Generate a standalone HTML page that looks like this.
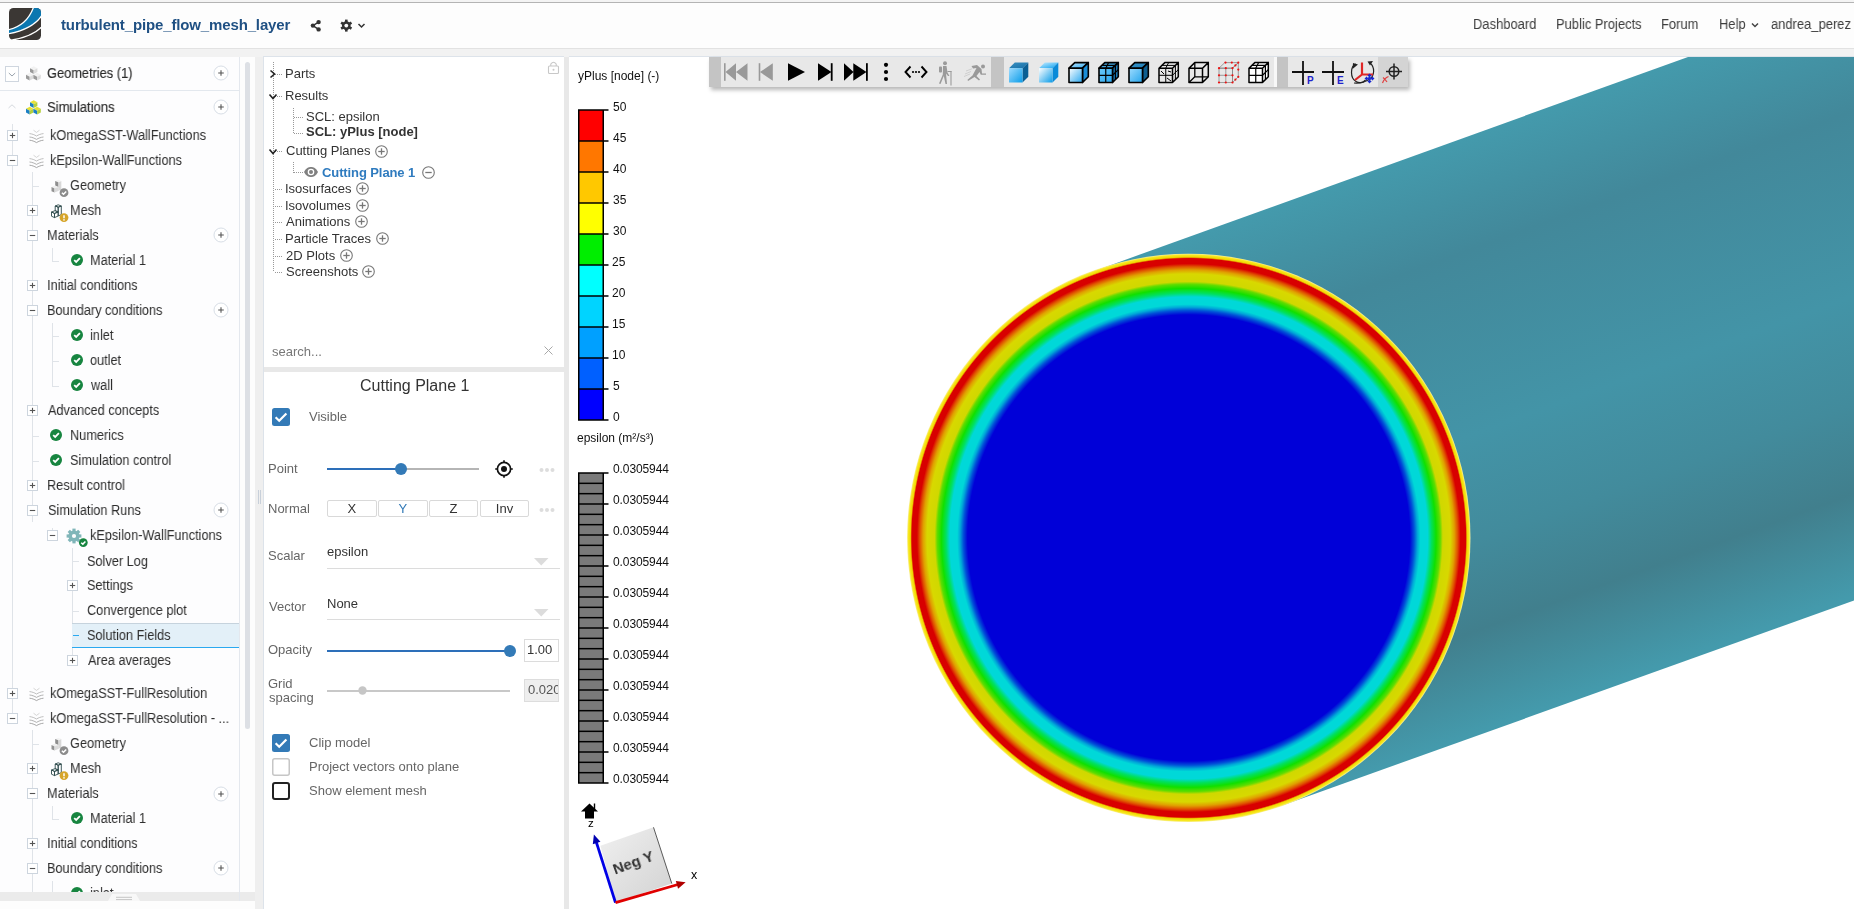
<!DOCTYPE html>
<html><head><meta charset="utf-8"><style>
*{box-sizing:border-box;margin:0;padding:0}
html,body{width:1854px;height:909px;overflow:hidden;background:#fff;font-family:"Liberation Sans",sans-serif;position:relative}
.t{position:absolute;white-space:nowrap;will-change:transform}
.r{position:absolute}
.s{position:absolute;overflow:visible}
</style></head><body>
<div class="r" style="left:0px;top:0px;width:1854px;height:2px;background:#f4f4f4;"></div>
<div class="r" style="left:0px;top:2px;width:1854px;height:1px;background:#b4b4b4;"></div>
<div class="r" style="left:0px;top:3px;width:1854px;height:45px;background:#fdfdfd;"></div>
<div class="r" style="left:0px;top:48px;width:1854px;height:1px;background:#e2e2e2;"></div>
<div class="r" style="left:0px;top:49px;width:1854px;height:8px;background:#f2f2f2;"></div>
<svg class="s" style="left:9px;top:8px;" width="32" height="32" viewBox="0 0 32 32"><defs><clipPath id="lc"><rect x="0" y="0" width="32" height="32" rx="4.5"/></clipPath></defs>
<g clip-path="url(#lc)"><rect width="32" height="32" fill="#3b3734"/>
<path d="M24.6,-1 L33,-1 L33,7.2 C28,15 17,22.5 -1,25.9 L-1,21.9 C12,19 20,12 24.6,-1Z" fill="#0b77b0" stroke="#fff" stroke-width="1.3"/>
<path d="M33,18.6 C26,26 15,30.5 -1,32.6" stroke="#fff" stroke-width="1.3" fill="none"/>
<path d="M33,20.2 C26,28 16,32 5,33.5" stroke="#fff" stroke-width="0" fill="none"/>
</g></svg>
<div class="t" style="left:61.31689453125px;top:15.00px;font-size:15px;line-height:20px;color:#1f5083;font-weight:bold;letter-spacing:-0.14px;">turbulent_pipe_flow_mesh_layer</div>
<svg class="s" style="left:310px;top:19px;" width="12" height="14" viewBox="0 0 12 14"><g fill="#333"><circle cx="2.9" cy="6.6" r="2.2"/><circle cx="8.6" cy="3.1" r="2.2"/><circle cx="8.6" cy="10.4" r="2.2"/></g>
<path d="M2.9,6.6 L8.6,3.1 M2.9,6.6 L8.6,10.4" stroke="#333" stroke-width="1.4"/></svg>
<svg class="s" style="left:339px;top:19px;" width="14" height="14" viewBox="0 0 14 14"><g transform="translate(7.3,6.6)" fill="#333"><rect x="-1.3" y="-6" width="2.6" height="3" transform="rotate(0)"/><rect x="-1.3" y="-6" width="2.6" height="3" transform="rotate(60)"/><rect x="-1.3" y="-6" width="2.6" height="3" transform="rotate(120)"/><rect x="-1.3" y="-6" width="2.6" height="3" transform="rotate(180)"/><rect x="-1.3" y="-6" width="2.6" height="3" transform="rotate(240)"/><rect x="-1.3" y="-6" width="2.6" height="3" transform="rotate(300)"/><circle r="4.3"/><circle r="1.9" fill="#fdfdfd"/></g></svg>
<svg class="s" style="left:357px;top:22px;" width="9" height="7" viewBox="0 0 9 7"><path d="M1.5,2 L4.5,5 L7.5,2" stroke="#333" stroke-width="1.5" fill="none"/></svg>
<div class="t" style="left:1473.4376953125px;top:14.00px;font-size:14px;line-height:20px;color:#3d3d3d;font-weight:normal;letter-spacing:0px;transform:scaleX(0.925);transform-origin:0 0;">Dashboard</div>
<div class="t" style="left:1556.4376953125px;top:14.00px;font-size:14px;line-height:20px;color:#3d3d3d;font-weight:normal;letter-spacing:0px;transform:scaleX(0.925);transform-origin:0 0;">Public Projects</div>
<div class="t" style="left:1660.9376953125px;top:14.00px;font-size:14px;line-height:20px;color:#3d3d3d;font-weight:normal;letter-spacing:0px;transform:scaleX(0.925);transform-origin:0 0;">Forum</div>
<div class="t" style="left:1718.9376953125px;top:14.00px;font-size:14px;line-height:20px;color:#3d3d3d;font-weight:normal;letter-spacing:0px;transform:scaleX(0.925);transform-origin:0 0;">Help</div>
<div class="t" style="left:1771.4498779296875px;top:14.00px;font-size:14px;line-height:20px;color:#3d3d3d;font-weight:normal;letter-spacing:0px;transform:scaleX(0.925);transform-origin:0 0;">andrea_perez</div>
<svg class="s" style="left:1750px;top:21px;" width="10" height="8" viewBox="0 0 10 8"><path d="M2,2.5 L5,5.5 L8,2.5" stroke="#444" stroke-width="1.5" fill="none"/></svg>
<div class="r" style="left:0px;top:57px;width:239px;height:835px;background:#fdfdfe;"></div>
<div class="r" style="left:239px;top:57px;width:1px;height:835px;background:#e4e8ee;"></div>
<div class="r" style="left:240px;top:57px;width:15px;height:835px;background:#fdfdfd;"></div>
<div class="r" style="left:245px;top:62px;width:5px;height:667px;background:#dde0e5;border-radius:3px"></div>
<div class="r" style="left:255px;top:57px;width:8px;height:852px;background:#efefef;"></div>
<div class="r" style="left:258px;top:490px;width:1px;height:14px;background:#c8d0da;"></div>
<div class="r" style="left:260px;top:490px;width:1px;height:14px;background:#c8d0da;"></div>
<svg class="s" style="left:5px;top:66px;" width="14" height="16" viewBox="0 0 14 16"><rect x="0.5" y="0.5" width="13" height="15" fill="#fff" stroke="#cfd6df"/><path d="M3.8,7 L7,10 L10.2,7" stroke="#9aa3ad" stroke-width="1" fill="none"/></svg>
<svg class="s" style="left:26px;top:66px;" width="16" height="15" viewBox="0 0 16 15"><path d="M4,2.3 L7.7,0.3 L11.4,2.3 L7.7,4.3Z" fill="#f2f2f2"/><path d="M4,2.3 L7.7,4.3 L7.7,7.8999999999999995 L4,5.8999999999999995Z" fill="#9a9a9a"/><path d="M7.7,4.3 L11.4,2.3 L11.4,5.8999999999999995 L7.7,7.8999999999999995Z" fill="#dcdcdc"/><path d="M0,8.8 L3.7,6.8 L7.4,8.8 L3.7,10.8Z" fill="#f2f2f2"/><path d="M0,8.8 L3.7,10.8 L3.7,14.399999999999999 L0,12.399999999999999Z" fill="#9a9a9a"/><path d="M3.7,10.8 L7.4,8.8 L7.4,12.399999999999999 L3.7,14.399999999999999Z" fill="#dcdcdc"/><path d="M7.4,8.8 L11.100000000000001,6.8 L14.8,8.8 L11.100000000000001,10.8Z" fill="#f2f2f2"/><path d="M7.4,8.8 L11.100000000000001,10.8 L11.100000000000001,14.399999999999999 L7.4,12.399999999999999Z" fill="#9a9a9a"/><path d="M11.100000000000001,10.8 L14.8,8.8 L14.8,12.399999999999999 L11.100000000000001,14.399999999999999Z" fill="#dcdcdc"/></svg>
<div class="t" style="left:46.8557470703125px;top:63.00px;font-size:14px;line-height:20px;color:#2a2a2a;font-weight:normal;letter-spacing:0px;transform:scaleX(0.915);transform-origin:0 0;-webkit-text-stroke:0.15px #2a2a2a">Geometries (1)</div>
<svg class="s" style="left:213.4px;top:65.4px;" width="16" height="16" viewBox="0 0 16 16"><circle cx="8" cy="8" r="7" fill="#fff" stroke="#d8dee6"/><path d="M5.2,8 H10.8 M8,5.2 V10.8" stroke="#555" stroke-width="1.1"/></svg>
<div class="r" style="left:0px;top:90px;width:239px;height:1px;background:#e3e8ee;"></div>
<svg class="s" style="left:7px;top:103px;" width="10" height="7" viewBox="0 0 10 7"><path d="M1.5,5 L5,1.8 L8.5,5" stroke="#d5d9de" stroke-width="1" fill="none"/></svg>
<svg class="s" style="left:26px;top:100px;" width="16" height="15" viewBox="0 0 16 15"><path d="M4,2.3 L7.7,0.3 L11.4,2.3 L7.7,4.3Z" fill="#e6e23a"/><path d="M4,2.3 L7.7,4.3 L7.7,7.8999999999999995 L4,5.8999999999999995Z" fill="#1a7fc4"/><path d="M7.7,4.3 L11.4,2.3 L11.4,5.8999999999999995 L7.7,7.8999999999999995Z" fill="#b4cf3c"/><path d="M0,8.8 L3.7,6.8 L7.4,8.8 L3.7,10.8Z" fill="#e6e23a"/><path d="M0,8.8 L3.7,10.8 L3.7,14.399999999999999 L0,12.399999999999999Z" fill="#1a7fc4"/><path d="M3.7,10.8 L7.4,8.8 L7.4,12.399999999999999 L3.7,14.399999999999999Z" fill="#b4cf3c"/><path d="M7.4,8.8 L11.100000000000001,6.8 L14.8,8.8 L11.100000000000001,10.8Z" fill="#e6e23a"/><path d="M7.4,8.8 L11.100000000000001,10.8 L11.100000000000001,14.399999999999999 L7.4,12.399999999999999Z" fill="#1a7fc4"/><path d="M11.100000000000001,10.8 L14.8,8.8 L14.8,12.399999999999999 L11.100000000000001,14.399999999999999Z" fill="#b4cf3c"/></svg>
<div class="t" style="left:46.9055810546875px;top:97.00px;font-size:14px;line-height:20px;color:#2a2a2a;font-weight:normal;letter-spacing:0px;transform:scaleX(0.935);transform-origin:0 0;-webkit-text-stroke:0.15px #2a2a2a">Simulations</div>
<svg class="s" style="left:213.4px;top:99.3px;" width="16" height="16" viewBox="0 0 16 16"><circle cx="8" cy="8" r="7" fill="#fff" stroke="#d8dee6"/><path d="M5.2,8 H10.8 M8,5.2 V10.8" stroke="#555" stroke-width="1.1"/></svg>
<div class="r" style="left:12px;top:124px;width:1px;height:564px;background:#dfe3e8;"></div>
<div class="r" style="left:32px;top:172px;width:1px;height:350px;background:#dfe3e8;"></div>
<div class="r" style="left:52px;top:248px;width:1px;height:14px;background:#dfe3e8;"></div>
<div class="r" style="left:52px;top:261px;width:7px;height:1px;background:#dfe3e8;"></div>
<div class="r" style="left:52px;top:323px;width:1px;height:63px;background:#dfe3e8;"></div>
<div class="r" style="left:52px;top:335.5px;width:7px;height:1px;background:#dfe3e8;"></div>
<div class="r" style="left:52px;top:360.5px;width:7px;height:1px;background:#dfe3e8;"></div>
<div class="r" style="left:52px;top:385.5px;width:7px;height:1px;background:#dfe3e8;"></div>
<div class="r" style="left:52px;top:528px;width:1px;height:2px;background:#dfe3e8;"></div>
<div class="r" style="left:72px;top:548px;width:1px;height:113px;background:#dfe3e8;"></div>
<div class="r" style="left:72px;top:560.5px;width:7px;height:1px;background:#dfe3e8;"></div>
<div class="r" style="left:72px;top:610.5px;width:7px;height:1px;background:#dfe3e8;"></div>
<div class="r" style="left:72px;top:635.5px;width:7px;height:1px;background:#dfe3e8;"></div>
<div class="r" style="left:32px;top:185.5px;width:7px;height:1px;background:#dfe3e8;"></div>
<div class="r" style="left:32px;top:435.5px;width:7px;height:1px;background:#dfe3e8;"></div>
<div class="r" style="left:32px;top:460.5px;width:7px;height:1px;background:#dfe3e8;"></div>
<svg class="s" style="left:7px;top:129.8px;" width="11" height="11" viewBox="0 0 11 11"><rect x="0.5" y="0.5" width="10" height="10" fill="#fff" stroke="#cdd5de"/><path d="M2.8,5.5 H8.2" stroke="#555" stroke-width="1.1"/><path d="M5.5,2.8 V8.2" stroke="#555" stroke-width="1.1"/></svg>
<svg class="s" style="left:29px;top:129px;" width="16" height="15" viewBox="0 0 16 15"><path d="M4.5,1.2 L7.5,3.4000000000000004 L10.5,1.2" stroke="#cfcfcf" stroke-width="0.9" fill="none"/><path d="M0.5,4.6 C3,4.8 5.5,5.8 7.5,7.0 C9.5,5.8 12,4.8 14.5,4.6" stroke="#b8b8b8" stroke-width="0.9" fill="none"/><path d="M0.5,8.0 C3,8.2 5.5,9.2 7.5,10.4 C9.5,9.2 12,8.2 14.5,8.0" stroke="#a8a8a8" stroke-width="0.9" fill="none"/><path d="M0.5,11.2 C3,11.399999999999999 5.5,12.399999999999999 7.5,13.6 C9.5,12.399999999999999 12,11.399999999999999 14.5,11.2" stroke="#9c9c9c" stroke-width="0.9" fill="none"/></svg>
<div class="t" style="left:50.341542968750005px;top:125.00px;font-size:14px;line-height:20px;color:#2e2e2e;font-weight:normal;letter-spacing:0px;transform:scaleX(0.91);transform-origin:0 0;">kOmegaSST-WallFunctions</div>
<svg class="s" style="left:7px;top:154.8px;" width="11" height="11" viewBox="0 0 11 11"><rect x="0.5" y="0.5" width="10" height="10" fill="#fff" stroke="#cdd5de"/><path d="M2.8,5.5 H8.2" stroke="#555" stroke-width="1.1"/></svg>
<svg class="s" style="left:29px;top:154px;" width="16" height="15" viewBox="0 0 16 15"><path d="M4.5,1.2 L7.5,3.4000000000000004 L10.5,1.2" stroke="#cfcfcf" stroke-width="0.9" fill="none"/><path d="M0.5,4.6 C3,4.8 5.5,5.8 7.5,7.0 C9.5,5.8 12,4.8 14.5,4.6" stroke="#b8b8b8" stroke-width="0.9" fill="none"/><path d="M0.5,8.0 C3,8.2 5.5,9.2 7.5,10.4 C9.5,9.2 12,8.2 14.5,8.0" stroke="#a8a8a8" stroke-width="0.9" fill="none"/><path d="M0.5,11.2 C3,11.399999999999999 5.5,12.399999999999999 7.5,13.6 C9.5,12.399999999999999 12,11.399999999999999 14.5,11.2" stroke="#9c9c9c" stroke-width="0.9" fill="none"/></svg>
<div class="t" style="left:50.341542968750005px;top:150.00px;font-size:14px;line-height:20px;color:#2e2e2e;font-weight:normal;letter-spacing:0px;transform:scaleX(0.91);transform-origin:0 0;">kEpsilon-WallFunctions</div>
<svg class="s" style="left:50.5px;top:178.5px;" width="18" height="18" viewBox="0 0 18 18"><polygon points="7.2,3.2 10.3,2 10.3,10.6 7.2,12" fill="#d8d8d8"/><polygon points="4.2,2 7.2,0.8 10.3,2 7.2,3.2" fill="#f3f3f3"/><polygon points="4.2,2 7.2,3.2 7.2,8 4.2,6.8" fill="#8e8e8e"/><polygon points="0.5,8 4.2,6.6 7.2,8 3.5,9.4" fill="#efefef"/><polygon points="0.5,8 3.5,9.4 3.5,13.6 0.5,12.2" fill="#929292"/><polygon points="3.5,9.4 7.2,8 7.2,12 3.5,13.6" fill="#dadada"/><circle cx="13" cy="13.7" r="4.4" fill="#8c8c8c"/><path d="M10.9,13.7 L12.5,15.2 L15.2,12.4" stroke="#fff" stroke-width="1.5" fill="none"/></svg>
<div class="t" style="left:70.059267578125px;top:175.00px;font-size:14px;line-height:20px;color:#2e2e2e;font-weight:normal;letter-spacing:0px;transform:scaleX(0.91);transform-origin:0 0;">Geometry</div>
<svg class="s" style="left:27px;top:205.0px;" width="11" height="11" viewBox="0 0 11 11"><rect x="0.5" y="0.5" width="10" height="10" fill="#fff" stroke="#cdd5de"/><path d="M2.8,5.5 H8.2" stroke="#555" stroke-width="1.1"/><path d="M5.5,2.8 V8.2" stroke="#555" stroke-width="1.1"/></svg>
<svg class="s" style="left:50.5px;top:203.5px;" width="18" height="18" viewBox="0 0 18 18"><g fill="none" stroke="#2e4b4c" stroke-width="0.9" stroke-linejoin="round"><polygon points="7.2,3.2 10.3,2 10.3,10.6 7.2,12"/><polygon points="4.2,2 7.2,0.8 10.3,2 7.2,3.2"/><polygon points="4.2,2 7.2,3.2 7.2,8 4.2,6.8"/><polygon points="0.5,8 4.2,6.6 7.2,8 3.5,9.4"/><polygon points="0.5,8 3.5,9.4 3.5,13.6 0.5,12.2"/><polygon points="3.5,9.4 7.2,8 7.2,12 3.5,13.6"/></g><circle cx="13" cy="13.6" r="4.4" fill="#d6a52a"/><path d="M13,11.2 V14.2" stroke="#fff" stroke-width="1.5"/><circle cx="13" cy="15.9" r="0.8" fill="#fff"/></svg>
<div class="t" style="left:69.654921875px;top:200.00px;font-size:14px;line-height:20px;color:#2e2e2e;font-weight:normal;letter-spacing:0px;transform:scaleX(0.91);transform-origin:0 0;">Mesh</div>
<svg class="s" style="left:27px;top:230.0px;" width="11" height="11" viewBox="0 0 11 11"><rect x="0.5" y="0.5" width="10" height="10" fill="#fff" stroke="#cdd5de"/><path d="M2.8,5.5 H8.2" stroke="#555" stroke-width="1.1"/></svg>
<div class="t" style="left:47.154921875px;top:225.00px;font-size:14px;line-height:20px;color:#2e2e2e;font-weight:normal;letter-spacing:0px;transform:scaleX(0.91);transform-origin:0 0;">Materials</div>
<svg class="s" style="left:213.4px;top:227.3px;" width="16" height="16" viewBox="0 0 16 16"><circle cx="8" cy="8" r="7" fill="#fff" stroke="#d8dee6"/><path d="M5.2,8 H10.8 M8,5.2 V10.8" stroke="#555" stroke-width="1.1"/></svg>
<svg class="s" style="left:70.5px;top:254.39999999999998px;" width="12" height="12" viewBox="0 0 12 12"><circle cx="6" cy="6" r="6" fill="#178540"/><path d="M3.2,6.1 L5.2,8 L8.9,4.2" stroke="#fff" stroke-width="1.8" fill="none"/></svg>
<div class="t" style="left:89.654921875px;top:250.00px;font-size:14px;line-height:20px;color:#2e2e2e;font-weight:normal;letter-spacing:0px;transform:scaleX(0.91);transform-origin:0 0;">Material 1</div>
<svg class="s" style="left:27px;top:280.0px;" width="11" height="11" viewBox="0 0 11 11"><rect x="0.5" y="0.5" width="10" height="10" fill="#fff" stroke="#cdd5de"/><path d="M2.8,5.5 H8.2" stroke="#555" stroke-width="1.1"/><path d="M5.5,2.8 V8.2" stroke="#555" stroke-width="1.1"/></svg>
<div class="t" style="left:47.024287109375px;top:275.00px;font-size:14px;line-height:20px;color:#2e2e2e;font-weight:normal;letter-spacing:0px;transform:scaleX(0.91);transform-origin:0 0;">Initial conditions</div>
<svg class="s" style="left:27px;top:305.0px;" width="11" height="11" viewBox="0 0 11 11"><rect x="0.5" y="0.5" width="10" height="10" fill="#fff" stroke="#cdd5de"/><path d="M2.8,5.5 H8.2" stroke="#555" stroke-width="1.1"/></svg>
<div class="t" style="left:47.154921875px;top:300.00px;font-size:14px;line-height:20px;color:#2e2e2e;font-weight:normal;letter-spacing:0px;transform:scaleX(0.91);transform-origin:0 0;">Boundary conditions</div>
<svg class="s" style="left:213.4px;top:302.3px;" width="16" height="16" viewBox="0 0 16 16"><circle cx="8" cy="8" r="7" fill="#fff" stroke="#d8dee6"/><path d="M5.2,8 H10.8 M8,5.2 V10.8" stroke="#555" stroke-width="1.1"/></svg>
<svg class="s" style="left:70.5px;top:329.4px;" width="12" height="12" viewBox="0 0 12 12"><circle cx="6" cy="6" r="6" fill="#178540"/><path d="M3.2,6.1 L5.2,8 L8.9,4.2" stroke="#fff" stroke-width="1.8" fill="none"/></svg>
<div class="t" style="left:89.847763671875px;top:325.00px;font-size:14px;line-height:20px;color:#2e2e2e;font-weight:normal;letter-spacing:0px;transform:scaleX(0.91);transform-origin:0 0;">inlet</div>
<svg class="s" style="left:70.5px;top:354.4px;" width="12" height="12" viewBox="0 0 12 12"><circle cx="6" cy="6" r="6" fill="#178540"/><path d="M3.2,6.1 L5.2,8 L8.9,4.2" stroke="#fff" stroke-width="1.8" fill="none"/></svg>
<div class="t" style="left:90.16501953125px;top:350.00px;font-size:14px;line-height:20px;color:#2e2e2e;font-weight:normal;letter-spacing:0px;transform:scaleX(0.91);transform-origin:0 0;">outlet</div>
<svg class="s" style="left:70.5px;top:379.4px;" width="12" height="12" viewBox="0 0 12 12"><circle cx="6" cy="6" r="6" fill="#178540"/><path d="M3.2,6.1 L5.2,8 L8.9,4.2" stroke="#fff" stroke-width="1.8" fill="none"/></svg>
<div class="t" style="left:90.718662109375px;top:375.00px;font-size:14px;line-height:20px;color:#2e2e2e;font-weight:normal;letter-spacing:0px;transform:scaleX(0.91);transform-origin:0 0;">wall</div>
<svg class="s" style="left:27px;top:405.0px;" width="11" height="11" viewBox="0 0 11 11"><rect x="0.5" y="0.5" width="10" height="10" fill="#fff" stroke="#cdd5de"/><path d="M2.8,5.5 H8.2" stroke="#555" stroke-width="1.1"/><path d="M5.5,2.8 V8.2" stroke="#555" stroke-width="1.1"/></svg>
<div class="t" style="left:48.1751171875px;top:400.00px;font-size:14px;line-height:20px;color:#2e2e2e;font-weight:normal;letter-spacing:0px;transform:scaleX(0.91);transform-origin:0 0;">Advanced concepts</div>
<svg class="s" style="left:50.4px;top:429.4px;" width="12" height="12" viewBox="0 0 12 12"><circle cx="6" cy="6" r="6" fill="#178540"/><path d="M3.2,6.1 L5.2,8 L8.9,4.2" stroke="#fff" stroke-width="1.8" fill="none"/></svg>
<div class="t" style="left:69.654921875px;top:425.00px;font-size:14px;line-height:20px;color:#2e2e2e;font-weight:normal;letter-spacing:0px;transform:scaleX(0.91);transform-origin:0 0;">Numerics</div>
<svg class="s" style="left:50.4px;top:454.4px;" width="12" height="12" viewBox="0 0 12 12"><circle cx="6" cy="6" r="6" fill="#178540"/><path d="M3.2,6.1 L5.2,8 L8.9,4.2" stroke="#fff" stroke-width="1.8" fill="none"/></svg>
<div class="t" style="left:70.121474609375px;top:450.00px;font-size:14px;line-height:20px;color:#2e2e2e;font-weight:normal;letter-spacing:0px;transform:scaleX(0.91);transform-origin:0 0;">Simulation control</div>
<svg class="s" style="left:27px;top:480.0px;" width="11" height="11" viewBox="0 0 11 11"><rect x="0.5" y="0.5" width="10" height="10" fill="#fff" stroke="#cdd5de"/><path d="M2.8,5.5 H8.2" stroke="#555" stroke-width="1.1"/><path d="M5.5,2.8 V8.2" stroke="#555" stroke-width="1.1"/></svg>
<div class="t" style="left:47.154921875px;top:475.00px;font-size:14px;line-height:20px;color:#2e2e2e;font-weight:normal;letter-spacing:0px;transform:scaleX(0.91);transform-origin:0 0;">Result control</div>
<svg class="s" style="left:27px;top:505.0px;" width="11" height="11" viewBox="0 0 11 11"><rect x="0.5" y="0.5" width="10" height="10" fill="#fff" stroke="#cdd5de"/><path d="M2.8,5.5 H8.2" stroke="#555" stroke-width="1.1"/></svg>
<div class="t" style="left:47.621474609375px;top:500.00px;font-size:14px;line-height:20px;color:#2e2e2e;font-weight:normal;letter-spacing:0px;transform:scaleX(0.91);transform-origin:0 0;">Simulation Runs</div>
<svg class="s" style="left:213.4px;top:502.3px;" width="16" height="16" viewBox="0 0 16 16"><circle cx="8" cy="8" r="7" fill="#fff" stroke="#d8dee6"/><path d="M5.2,8 H10.8 M8,5.2 V10.8" stroke="#555" stroke-width="1.1"/></svg>
<svg class="s" style="left:47px;top:530.0px;" width="11" height="11" viewBox="0 0 11 11"><rect x="0.5" y="0.5" width="10" height="10" fill="#fff" stroke="#cdd5de"/><path d="M2.8,5.5 H8.2" stroke="#555" stroke-width="1.1"/></svg>
<svg class="s" style="left:66.3px;top:527.8px;" width="20" height="20" viewBox="0 0 20 20"><g transform="translate(8,8)" fill="#80b6b9"><rect x="-1.6" y="-7.4" width="3.2" height="3.4" transform="rotate(0)"/><rect x="-1.6" y="-7.4" width="3.2" height="3.4" transform="rotate(45)"/><rect x="-1.6" y="-7.4" width="3.2" height="3.4" transform="rotate(90)"/><rect x="-1.6" y="-7.4" width="3.2" height="3.4" transform="rotate(135)"/><rect x="-1.6" y="-7.4" width="3.2" height="3.4" transform="rotate(180)"/><rect x="-1.6" y="-7.4" width="3.2" height="3.4" transform="rotate(225)"/><rect x="-1.6" y="-7.4" width="3.2" height="3.4" transform="rotate(270)"/><rect x="-1.6" y="-7.4" width="3.2" height="3.4" transform="rotate(315)"/><circle r="5.6"/><circle r="2.1" fill="#fdfdfe"/></g><circle cx="17.3" cy="14.6" r="4.4" fill="#178540"/><path d="M15.2,14.7 L16.8,16.1 L19.4,13.4" stroke="#fff" stroke-width="1.5" fill="none"/></svg>
<div class="t" style="left:90.34154296875px;top:525.00px;font-size:14px;line-height:20px;color:#2e2e2e;font-weight:normal;letter-spacing:0px;transform:scaleX(0.91);transform-origin:0 0;">kEpsilon-WallFunctions</div>
<div class="t" style="left:87.321474609375px;top:551.00px;font-size:14px;line-height:20px;color:#2e2e2e;font-weight:normal;letter-spacing:0px;transform:scaleX(0.91);transform-origin:0 0;">Solver Log</div>
<svg class="s" style="left:67px;top:580.0px;" width="11" height="11" viewBox="0 0 11 11"><rect x="0.5" y="0.5" width="10" height="10" fill="#fff" stroke="#cdd5de"/><path d="M2.8,5.5 H8.2" stroke="#555" stroke-width="1.1"/><path d="M5.5,2.8 V8.2" stroke="#555" stroke-width="1.1"/></svg>
<div class="t" style="left:87.321474609375px;top:575.00px;font-size:14px;line-height:20px;color:#2e2e2e;font-weight:normal;letter-spacing:0px;transform:scaleX(0.91);transform-origin:0 0;">Settings</div>
<div class="t" style="left:87.25304687500001px;top:600.00px;font-size:14px;line-height:20px;color:#2e2e2e;font-weight:normal;letter-spacing:0px;transform:scaleX(0.91);transform-origin:0 0;">Convergence plot</div>
<div class="r" style="left:72px;top:623px;width:167px;height:25px;background:#e3f0f8;border-top:1px solid #c6d3dd;border-bottom:1px solid #2aa9f0"></div>
<div class="r" style="left:73px;top:635px;width:6px;height:1px;background:#2aa9f0;"></div>
<div class="t" style="left:87.321474609375px;top:625.00px;font-size:14px;line-height:20px;color:#2e2e2e;font-weight:normal;letter-spacing:0px;transform:scaleX(0.91);transform-origin:0 0;">Solution Fields</div>
<svg class="s" style="left:67px;top:655.0px;" width="11" height="11" viewBox="0 0 11 11"><rect x="0.5" y="0.5" width="10" height="10" fill="#fff" stroke="#cdd5de"/><path d="M2.8,5.5 H8.2" stroke="#555" stroke-width="1.1"/><path d="M5.5,2.8 V8.2" stroke="#555" stroke-width="1.1"/></svg>
<div class="t" style="left:87.87511718750001px;top:650.00px;font-size:14px;line-height:20px;color:#2e2e2e;font-weight:normal;letter-spacing:0px;transform:scaleX(0.91);transform-origin:0 0;">Area averages</div>
<svg class="s" style="left:7px;top:687.8px;" width="11" height="11" viewBox="0 0 11 11"><rect x="0.5" y="0.5" width="10" height="10" fill="#fff" stroke="#cdd5de"/><path d="M2.8,5.5 H8.2" stroke="#555" stroke-width="1.1"/><path d="M5.5,2.8 V8.2" stroke="#555" stroke-width="1.1"/></svg>
<svg class="s" style="left:29px;top:687px;" width="16" height="15" viewBox="0 0 16 15"><path d="M4.5,1.2 L7.5,3.4000000000000004 L10.5,1.2" stroke="#cfcfcf" stroke-width="0.9" fill="none"/><path d="M0.5,4.6 C3,4.8 5.5,5.8 7.5,7.0 C9.5,5.8 12,4.8 14.5,4.6" stroke="#b8b8b8" stroke-width="0.9" fill="none"/><path d="M0.5,8.0 C3,8.2 5.5,9.2 7.5,10.4 C9.5,9.2 12,8.2 14.5,8.0" stroke="#a8a8a8" stroke-width="0.9" fill="none"/><path d="M0.5,11.2 C3,11.399999999999999 5.5,12.399999999999999 7.5,13.6 C9.5,12.399999999999999 12,11.399999999999999 14.5,11.2" stroke="#9c9c9c" stroke-width="0.9" fill="none"/></svg>
<div class="t" style="left:50.341542968750005px;top:683.00px;font-size:14px;line-height:20px;color:#2e2e2e;font-weight:normal;letter-spacing:0px;transform:scaleX(0.91);transform-origin:0 0;">kOmegaSST-FullResolution</div>
<div class="r" style="left:12px;top:699px;width:1px;height:14px;background:#dfe3e8;"></div>
<svg class="s" style="left:7px;top:712.8px;" width="11" height="11" viewBox="0 0 11 11"><rect x="0.5" y="0.5" width="10" height="10" fill="#fff" stroke="#cdd5de"/><path d="M2.8,5.5 H8.2" stroke="#555" stroke-width="1.1"/></svg>
<svg class="s" style="left:29px;top:712px;" width="16" height="15" viewBox="0 0 16 15"><path d="M4.5,1.2 L7.5,3.4000000000000004 L10.5,1.2" stroke="#cfcfcf" stroke-width="0.9" fill="none"/><path d="M0.5,4.6 C3,4.8 5.5,5.8 7.5,7.0 C9.5,5.8 12,4.8 14.5,4.6" stroke="#b8b8b8" stroke-width="0.9" fill="none"/><path d="M0.5,8.0 C3,8.2 5.5,9.2 7.5,10.4 C9.5,9.2 12,8.2 14.5,8.0" stroke="#a8a8a8" stroke-width="0.9" fill="none"/><path d="M0.5,11.2 C3,11.399999999999999 5.5,12.399999999999999 7.5,13.6 C9.5,12.399999999999999 12,11.399999999999999 14.5,11.2" stroke="#9c9c9c" stroke-width="0.9" fill="none"/></svg>
<div class="t" style="left:50.341542968750005px;top:708.00px;font-size:14px;line-height:20px;color:#2e2e2e;font-weight:normal;letter-spacing:0px;transform:scaleX(0.91);transform-origin:0 0;">kOmegaSST-FullResolution - ...</div>
<div class="r" style="left:32px;top:730px;width:1px;height:162px;background:#dfe3e8;"></div>
<div class="r" style="left:32px;top:743.5px;width:7px;height:1px;background:#dfe3e8;"></div>
<svg class="s" style="left:50.5px;top:736.5px;" width="18" height="18" viewBox="0 0 18 18"><polygon points="7.2,3.2 10.3,2 10.3,10.6 7.2,12" fill="#d8d8d8"/><polygon points="4.2,2 7.2,0.8 10.3,2 7.2,3.2" fill="#f3f3f3"/><polygon points="4.2,2 7.2,3.2 7.2,8 4.2,6.8" fill="#8e8e8e"/><polygon points="0.5,8 4.2,6.6 7.2,8 3.5,9.4" fill="#efefef"/><polygon points="0.5,8 3.5,9.4 3.5,13.6 0.5,12.2" fill="#929292"/><polygon points="3.5,9.4 7.2,8 7.2,12 3.5,13.6" fill="#dadada"/><circle cx="13" cy="13.7" r="4.4" fill="#8c8c8c"/><path d="M10.9,13.7 L12.5,15.2 L15.2,12.4" stroke="#fff" stroke-width="1.5" fill="none"/></svg>
<div class="t" style="left:70.059267578125px;top:733.00px;font-size:14px;line-height:20px;color:#2e2e2e;font-weight:normal;letter-spacing:0px;transform:scaleX(0.91);transform-origin:0 0;">Geometry</div>
<svg class="s" style="left:27px;top:762.9px;" width="11" height="11" viewBox="0 0 11 11"><rect x="0.5" y="0.5" width="10" height="10" fill="#fff" stroke="#cdd5de"/><path d="M2.8,5.5 H8.2" stroke="#555" stroke-width="1.1"/><path d="M5.5,2.8 V8.2" stroke="#555" stroke-width="1.1"/></svg>
<svg class="s" style="left:50.5px;top:761.5px;" width="18" height="18" viewBox="0 0 18 18"><g fill="none" stroke="#2e4b4c" stroke-width="0.9" stroke-linejoin="round"><polygon points="7.2,3.2 10.3,2 10.3,10.6 7.2,12"/><polygon points="4.2,2 7.2,0.8 10.3,2 7.2,3.2"/><polygon points="4.2,2 7.2,3.2 7.2,8 4.2,6.8"/><polygon points="0.5,8 4.2,6.6 7.2,8 3.5,9.4"/><polygon points="0.5,8 3.5,9.4 3.5,13.6 0.5,12.2"/><polygon points="3.5,9.4 7.2,8 7.2,12 3.5,13.6"/></g><circle cx="13" cy="13.6" r="4.4" fill="#d6a52a"/><path d="M13,11.2 V14.2" stroke="#fff" stroke-width="1.5"/><circle cx="13" cy="15.9" r="0.8" fill="#fff"/></svg>
<div class="t" style="left:69.654921875px;top:758.00px;font-size:14px;line-height:20px;color:#2e2e2e;font-weight:normal;letter-spacing:0px;transform:scaleX(0.91);transform-origin:0 0;">Mesh</div>
<svg class="s" style="left:27px;top:787.9px;" width="11" height="11" viewBox="0 0 11 11"><rect x="0.5" y="0.5" width="10" height="10" fill="#fff" stroke="#cdd5de"/><path d="M2.8,5.5 H8.2" stroke="#555" stroke-width="1.1"/></svg>
<div class="t" style="left:47.154921875px;top:783.00px;font-size:14px;line-height:20px;color:#2e2e2e;font-weight:normal;letter-spacing:0px;transform:scaleX(0.91);transform-origin:0 0;">Materials</div>
<svg class="s" style="left:213.4px;top:785.5px;" width="16" height="16" viewBox="0 0 16 16"><circle cx="8" cy="8" r="7" fill="#fff" stroke="#d8dee6"/><path d="M5.2,8 H10.8 M8,5.2 V10.8" stroke="#555" stroke-width="1.1"/></svg>
<div class="r" style="left:52px;top:806px;width:1px;height:14px;background:#dfe3e8;"></div>
<div class="r" style="left:52px;top:819px;width:7px;height:1px;background:#dfe3e8;"></div>
<svg class="s" style="left:70.5px;top:812.4px;" width="12" height="12" viewBox="0 0 12 12"><circle cx="6" cy="6" r="6" fill="#178540"/><path d="M3.2,6.1 L5.2,8 L8.9,4.2" stroke="#fff" stroke-width="1.8" fill="none"/></svg>
<div class="t" style="left:89.654921875px;top:808.00px;font-size:14px;line-height:20px;color:#2e2e2e;font-weight:normal;letter-spacing:0px;transform:scaleX(0.91);transform-origin:0 0;">Material 1</div>
<svg class="s" style="left:27px;top:837.9px;" width="11" height="11" viewBox="0 0 11 11"><rect x="0.5" y="0.5" width="10" height="10" fill="#fff" stroke="#cdd5de"/><path d="M2.8,5.5 H8.2" stroke="#555" stroke-width="1.1"/><path d="M5.5,2.8 V8.2" stroke="#555" stroke-width="1.1"/></svg>
<div class="t" style="left:47.024287109375px;top:833.00px;font-size:14px;line-height:20px;color:#2e2e2e;font-weight:normal;letter-spacing:0px;transform:scaleX(0.91);transform-origin:0 0;">Initial conditions</div>
<svg class="s" style="left:27px;top:862.9px;" width="11" height="11" viewBox="0 0 11 11"><rect x="0.5" y="0.5" width="10" height="10" fill="#fff" stroke="#cdd5de"/><path d="M2.8,5.5 H8.2" stroke="#555" stroke-width="1.1"/></svg>
<div class="t" style="left:47.154921875px;top:858.00px;font-size:14px;line-height:20px;color:#2e2e2e;font-weight:normal;letter-spacing:0px;transform:scaleX(0.91);transform-origin:0 0;">Boundary conditions</div>
<svg class="s" style="left:213.4px;top:860.3px;" width="16" height="16" viewBox="0 0 16 16"><circle cx="8" cy="8" r="7" fill="#fff" stroke="#d8dee6"/><path d="M5.2,8 H10.8 M8,5.2 V10.8" stroke="#555" stroke-width="1.1"/></svg>
<div class="r" style="left:52px;top:881px;width:1px;height:11px;background:#dfe3e8;"></div>
<svg class="s" style="left:70.5px;top:887.4px;" width="12" height="12" viewBox="0 0 12 12"><circle cx="6" cy="6" r="6" fill="#178540"/><path d="M3.2,6.1 L5.2,8 L8.9,4.2" stroke="#fff" stroke-width="1.8" fill="none"/></svg>
<div class="t" style="left:89.847763671875px;top:883.00px;font-size:14px;line-height:20px;color:#2e2e2e;font-weight:normal;letter-spacing:0px;transform:scaleX(0.91);transform-origin:0 0;">inlet</div>
<div class="r" style="left:0px;top:892px;width:255px;height:9px;background:#ebebeb;"></div>
<div class="r" style="left:0px;top:901px;width:255px;height:8px;background:#fdfdfd;"></div>
<svg class="s" style="left:108px;top:893px;" width="33" height="8" viewBox="0 0 33 8"><path d="M0,8 L4,1 L28,1 L32,8 Z" fill="#f8f8f8"/><path d="M8,4.3 H24 M8,6.6 H24" stroke="#b8b8b8" stroke-width="0.8"/></svg>
<div class="r" style="left:239px;top:892px;width:1px;height:9px;background:#e4e8ee;"></div>
<div class="r" style="left:263px;top:56px;width:301px;height:1px;background:#dde3ea;"></div>
<div class="r" style="left:263px;top:56px;width:1px;height:853px;background:#dde3ea;"></div>
<div class="r" style="left:264px;top:57px;width:300px;height:310px;background:#ffffff;"></div>
<div class="r" style="left:264px;top:372px;width:300px;height:537px;background:#ffffff;"></div>
<div class="r" style="left:264px;top:367px;width:300px;height:5px;background:#e8e8e8;"></div>
<div class="r" style="left:564px;top:57px;width:5px;height:852px;background:#e8e8e8;"></div>
<div class="r" style="left:273px;top:62px;width:1px;height:210px;background:repeating-linear-gradient(to bottom,#999 0,#999 1px,transparent 1px,transparent 2px)"></div>
<div class="r" style="left:275px;top:74px;width:8px;height:1px;background:repeating-linear-gradient(to right,#999 0,#999 1px,transparent 1px,transparent 2px)"></div>
<div class="r" style="left:275px;top:96px;width:8px;height:1px;background:repeating-linear-gradient(to right,#999 0,#999 1px,transparent 1px,transparent 2px)"></div>
<div class="r" style="left:275px;top:151px;width:8px;height:1px;background:repeating-linear-gradient(to right,#999 0,#999 1px,transparent 1px,transparent 2px)"></div>
<div class="r" style="left:275px;top:189px;width:8px;height:1px;background:repeating-linear-gradient(to right,#999 0,#999 1px,transparent 1px,transparent 2px)"></div>
<div class="r" style="left:275px;top:206px;width:8px;height:1px;background:repeating-linear-gradient(to right,#999 0,#999 1px,transparent 1px,transparent 2px)"></div>
<div class="r" style="left:275px;top:222px;width:8px;height:1px;background:repeating-linear-gradient(to right,#999 0,#999 1px,transparent 1px,transparent 2px)"></div>
<div class="r" style="left:275px;top:239px;width:8px;height:1px;background:repeating-linear-gradient(to right,#999 0,#999 1px,transparent 1px,transparent 2px)"></div>
<div class="r" style="left:275px;top:256px;width:8px;height:1px;background:repeating-linear-gradient(to right,#999 0,#999 1px,transparent 1px,transparent 2px)"></div>
<div class="r" style="left:275px;top:272px;width:8px;height:1px;background:repeating-linear-gradient(to right,#999 0,#999 1px,transparent 1px,transparent 2px)"></div>
<div class="r" style="left:293px;top:108px;width:1px;height:26px;background:repeating-linear-gradient(to bottom,#999 0,#999 1px,transparent 1px,transparent 2px)"></div>
<div class="r" style="left:294px;top:117px;width:10px;height:1px;background:repeating-linear-gradient(to right,#999 0,#999 1px,transparent 1px,transparent 2px)"></div>
<div class="r" style="left:294px;top:133px;width:10px;height:1px;background:repeating-linear-gradient(to right,#999 0,#999 1px,transparent 1px,transparent 2px)"></div>
<div class="r" style="left:293px;top:162px;width:1px;height:11px;background:repeating-linear-gradient(to bottom,#999 0,#999 1px,transparent 1px,transparent 2px)"></div>
<div class="r" style="left:294px;top:172px;width:10px;height:1px;background:repeating-linear-gradient(to right,#999 0,#999 1px,transparent 1px,transparent 2px)"></div>
<svg class="s" style="left:268px;top:69px;" width="9" height="10" viewBox="0 0 9 10"><path d="M2.5,1.5 L6.5,5 L2.5,8.5" stroke="#222" stroke-width="1.6" fill="none"/></svg>
<svg class="s" style="left:268px;top:92px;" width="10" height="9" viewBox="0 0 10 9"><path d="M1.5,2.5 L5,6.5 L8.5,2.5" stroke="#222" stroke-width="1.6" fill="none"/></svg>
<svg class="s" style="left:268px;top:147px;" width="10" height="9" viewBox="0 0 10 9"><path d="M1.5,2.5 L5,6.5 L8.5,2.5" stroke="#222" stroke-width="1.6" fill="none"/></svg>
<div class="t" style="left:285.43359375px;top:64.00px;font-size:13px;line-height:20px;color:#333;font-weight:normal;letter-spacing:0px;">Parts</div>
<div class="t" style="left:285.43359375px;top:86.00px;font-size:13px;line-height:20px;color:#333;font-weight:normal;letter-spacing:0px;">Results</div>
<div class="t" style="left:305.90966796875px;top:107.00px;font-size:13px;line-height:20px;color:#333;font-weight:normal;letter-spacing:0px;">SCL: epsilon</div>
<div class="t" style="left:306.12548828125px;top:122.00px;font-size:13px;line-height:20px;color:#333;font-weight:bold;letter-spacing:0px;">SCL: yPlus [node]</div>
<div class="t" style="left:285.83984375px;top:141.00px;font-size:13px;line-height:20px;color:#333;font-weight:normal;letter-spacing:0px;">Cutting Planes</div>
<svg class="s" style="left:375.2px;top:145.2px;" width="13" height="13" viewBox="0 0 13 13"><circle cx="6.5" cy="6.5" r="5.8" fill="none" stroke="#777" stroke-width="1.1"/><path d="M3.3,6.5 H9.7" stroke="#777" stroke-width="1.3"/><path d="M6.5,3.3 V9.7" stroke="#777" stroke-width="1.3"/></svg>
<svg class="s" style="left:304px;top:167px;" width="14" height="10" viewBox="0 0 14 10"><path d="M0,5 C2,1 4.5,0 7,0 C9.5,0 12,1 14,5 C12,9 9.5,10 7,10 C4.5,10 2,9 0,5Z" fill="#808080"/><circle cx="7" cy="5" r="3.3" fill="#fff"/><circle cx="7" cy="5" r="2" fill="#808080"/></svg>
<div class="t" style="left:321.866796875px;top:163.00px;font-size:13px;line-height:20px;color:#2f7bbf;font-weight:bold;letter-spacing:-0.1px;">Cutting Plane 1</div>
<svg class="s" style="left:421.5px;top:165.5px;" width="13" height="13" viewBox="0 0 13 13"><circle cx="6.5" cy="6.5" r="5.8" fill="none" stroke="#777" stroke-width="1.1"/><path d="M3.3,6.5 H9.7" stroke="#777" stroke-width="1.3"/></svg>
<div class="t" style="left:285.30029296875px;top:179.00px;font-size:13px;line-height:20px;color:#333;font-weight:normal;letter-spacing:0px;">Isosurfaces</div>
<svg class="s" style="left:356.3px;top:182.3px;" width="13" height="13" viewBox="0 0 13 13"><circle cx="6.5" cy="6.5" r="5.8" fill="none" stroke="#777" stroke-width="1.1"/><path d="M3.3,6.5 H9.7" stroke="#777" stroke-width="1.3"/><path d="M6.5,3.3 V9.7" stroke="#777" stroke-width="1.3"/></svg>
<div class="t" style="left:285.30029296875px;top:196.00px;font-size:13px;line-height:20px;color:#333;font-weight:normal;letter-spacing:0px;">Isovolumes</div>
<svg class="s" style="left:356.3px;top:198.7px;" width="13" height="13" viewBox="0 0 13 13"><circle cx="6.5" cy="6.5" r="5.8" fill="none" stroke="#777" stroke-width="1.1"/><path d="M3.3,6.5 H9.7" stroke="#777" stroke-width="1.3"/><path d="M6.5,3.3 V9.7" stroke="#777" stroke-width="1.3"/></svg>
<div class="t" style="left:286.474609375px;top:212.00px;font-size:13px;line-height:20px;color:#333;font-weight:normal;letter-spacing:0px;">Animations</div>
<svg class="s" style="left:354.5px;top:215.3px;" width="13" height="13" viewBox="0 0 13 13"><circle cx="6.5" cy="6.5" r="5.8" fill="none" stroke="#777" stroke-width="1.1"/><path d="M3.3,6.5 H9.7" stroke="#777" stroke-width="1.3"/><path d="M6.5,3.3 V9.7" stroke="#777" stroke-width="1.3"/></svg>
<div class="t" style="left:285.43359375px;top:229.00px;font-size:13px;line-height:20px;color:#333;font-weight:normal;letter-spacing:0px;">Particle Traces</div>
<svg class="s" style="left:376.3px;top:231.7px;" width="13" height="13" viewBox="0 0 13 13"><circle cx="6.5" cy="6.5" r="5.8" fill="none" stroke="#777" stroke-width="1.1"/><path d="M3.3,6.5 H9.7" stroke="#777" stroke-width="1.3"/><path d="M6.5,3.3 V9.7" stroke="#777" stroke-width="1.3"/></svg>
<div class="t" style="left:285.84619140625px;top:246.00px;font-size:13px;line-height:20px;color:#333;font-weight:normal;letter-spacing:0px;">2D Plots</div>
<svg class="s" style="left:339.5px;top:248.89999999999998px;" width="13" height="13" viewBox="0 0 13 13"><circle cx="6.5" cy="6.5" r="5.8" fill="none" stroke="#777" stroke-width="1.1"/><path d="M3.3,6.5 H9.7" stroke="#777" stroke-width="1.3"/><path d="M6.5,3.3 V9.7" stroke="#777" stroke-width="1.3"/></svg>
<div class="t" style="left:285.90966796875px;top:262.00px;font-size:13px;line-height:20px;color:#333;font-weight:normal;letter-spacing:0px;">Screenshots</div>
<svg class="s" style="left:362.3px;top:265.2px;" width="13" height="13" viewBox="0 0 13 13"><circle cx="6.5" cy="6.5" r="5.8" fill="none" stroke="#777" stroke-width="1.1"/><path d="M3.3,6.5 H9.7" stroke="#777" stroke-width="1.3"/><path d="M6.5,3.3 V9.7" stroke="#777" stroke-width="1.3"/></svg>
<svg class="s" style="left:547px;top:60px;" width="13" height="15" viewBox="0 0 13 15"><rect x="1.5" y="6" width="10" height="7.5" rx="1" fill="none" stroke="#c8c8c8" stroke-width="1.1"/><path d="M3.8,6 V4 Q6.5,0.5 9.2,4 V6" stroke="#c8c8c8" stroke-width="1.1" fill="none"/><circle cx="6.5" cy="9.7" r="1" fill="#c8c8c8"/></svg>
<div class="t" style="left:271.63818359375px;top:342.00px;font-size:13px;line-height:20px;color:#777;font-weight:normal;letter-spacing:0px;">search...</div>
<svg class="s" style="left:543px;top:345px;" width="11" height="11" viewBox="0 0 11 11"><path d="M1.5,1.5 L9.5,9.5 M9.5,1.5 L1.5,9.5" stroke="#a8a8a8" stroke-width="1"/></svg>
<div class="t" style="left:359.5875px;top:376.00px;font-size:16px;line-height:20px;color:#333;font-weight:normal;letter-spacing:0px;">Cutting Plane 1</div>
<svg class="s" style="left:272px;top:408px;" width="18" height="18" viewBox="0 0 18 18"><rect x="0" y="0" width="18" height="18" rx="2.5" fill="#337ab7"/><path d="M3.6,9.3 L7.2,12.8 L14.4,5.4" stroke="#fff" stroke-width="2.2" fill="none"/></svg>
<div class="t" style="left:309.14287109375px;top:407.00px;font-size:13px;line-height:20px;color:#666;font-weight:normal;letter-spacing:0px;">Visible</div>
<div class="t" style="left:268.43359375px;top:459.00px;font-size:13px;line-height:20px;color:#666;font-weight:normal;letter-spacing:0px;">Point</div>
<div class="r" style="left:327px;top:468px;width:74px;height:2px;background:#2d6fb9;"></div>
<div class="r" style="left:401px;top:468px;width:78px;height:2px;background:#b5b5b5;"></div>
<svg class="s" style="left:395px;top:463px;" width="12" height="12" viewBox="0 0 12 12"><circle cx="6" cy="6" r="6" fill="#337ab7"/></svg>
<svg class="s" style="left:494px;top:459px;" width="20" height="20" viewBox="0 0 20 20"><circle cx="10" cy="10" r="6.6" fill="none" stroke="#111" stroke-width="1.7"/><circle cx="10" cy="10" r="3" fill="#111"/><path d="M10,1.2 V3.6 M10,16.4 V18.8 M1.2,10 H3.6 M16.4,10 H18.8" stroke="#111" stroke-width="1.6"/></svg>
<svg class="s" style="left:538.5px;top:467px;" width="16" height="6" viewBox="0 0 16 6"><g fill="#dddddd"><circle cx="2.5" cy="3" r="2"/><circle cx="8" cy="3" r="2"/><circle cx="13.5" cy="3" r="2"/></g></svg>
<div class="t" style="left:267.93359375px;top:499.00px;font-size:13px;line-height:20px;color:#666;font-weight:normal;letter-spacing:0px;">Normal</div>
<div class="r" style="left:327.2px;top:500.3px;width:49.80000000000001px;height:16.5px;border:1px solid #d9d9d9;border-radius:2px;background:#fff"></div>
<div class="t" style="left:327.2px;top:499.10px;width:49.80000000000001px;text-align:center;font-size:13px;line-height:20px;color:#333">X</div>
<div class="r" style="left:378px;top:500.3px;width:49.69999999999999px;height:16.5px;border:1px solid #d9d9d9;border-radius:2px;background:#fff"></div>
<div class="t" style="left:378px;top:499.10px;width:49.69999999999999px;text-align:center;font-size:13px;line-height:20px;color:#337ab7">Y</div>
<div class="r" style="left:429px;top:500.3px;width:49px;height:16.5px;border:1px solid #d9d9d9;border-radius:2px;background:#fff"></div>
<div class="t" style="left:429px;top:499.10px;width:49px;text-align:center;font-size:13px;line-height:20px;color:#333">Z</div>
<div class="r" style="left:479.7px;top:500.3px;width:49.00000000000006px;height:16.5px;border:1px solid #d9d9d9;border-radius:2px;background:#fff"></div>
<div class="t" style="left:479.7px;top:499.10px;width:49.00000000000006px;text-align:center;font-size:13px;line-height:20px;color:#333">Inv</div>
<svg class="s" style="left:538.5px;top:507px;" width="16" height="6" viewBox="0 0 16 6"><g fill="#dddddd"><circle cx="2.5" cy="3" r="2"/><circle cx="8" cy="3" r="2"/><circle cx="13.5" cy="3" r="2"/></g></svg>
<div class="t" style="left:268.40966796875px;top:546.00px;font-size:13px;line-height:20px;color:#666;font-weight:normal;letter-spacing:0px;">Scalar</div>
<div class="t" style="left:327.04775390625px;top:542.00px;font-size:13px;line-height:20px;color:#333;font-weight:normal;letter-spacing:0px;">epsilon</div>
<div class="r" style="left:327px;top:568px;width:233px;height:1px;background:#dcdcdc;"></div>
<svg class="s" style="left:533.5px;top:557.5px;" width="15" height="8" viewBox="0 0 15 8"><path d="M0,0 H14.5 L7.25,7.5Z" fill="#dcdcdc"/></svg>
<div class="t" style="left:268.94287109375px;top:597.00px;font-size:13px;line-height:20px;color:#666;font-weight:normal;letter-spacing:0px;">Vector</div>
<div class="t" style="left:326.53359375px;top:594.00px;font-size:13px;line-height:20px;color:#333;font-weight:normal;letter-spacing:0px;">None</div>
<div class="r" style="left:327px;top:619px;width:233px;height:1px;background:#dcdcdc;"></div>
<svg class="s" style="left:533.5px;top:608.5px;" width="15" height="8" viewBox="0 0 15 8"><path d="M0,0 H14.5 L7.25,7.5Z" fill="#dcdcdc"/></svg>
<div class="t" style="left:268.38427734375px;top:640.00px;font-size:13px;line-height:20px;color:#666;font-weight:normal;letter-spacing:0px;">Opacity</div>
<div class="r" style="left:327px;top:649.5px;width:183px;height:2px;background:#2d6fb9;"></div>
<svg class="s" style="left:504px;top:644.5px;" width="12" height="12" viewBox="0 0 12 12"><circle cx="6" cy="6" r="6" fill="#337ab7"/></svg>
<div class="r" style="left:524px;top:639px;width:35px;height:22.5px;border:1px solid #dcdcdc;background:#fff"></div>
<div class="t" style="left:527.009765625px;top:640.00px;font-size:13px;line-height:20px;color:#333;font-weight:normal;letter-spacing:0px;">1.00</div>
<div class="t" style="left:268.34619140625px;top:674.00px;font-size:13px;line-height:20px;color:#666;font-weight:normal;letter-spacing:0px;">Grid</div>
<div class="t" style="left:268.63818359375px;top:688.00px;font-size:13px;line-height:20px;color:#666;font-weight:normal;letter-spacing:0px;">spacing</div>
<div class="r" style="left:327px;top:689.5px;width:183px;height:2px;background:#c8c8c8;"></div>
<svg class="s" style="left:357.5px;top:686px;" width="9" height="9" viewBox="0 0 9 9"><circle cx="4.5" cy="4.5" r="4.2" fill="#c6c6c6"/></svg>
<div class="r" style="left:524px;top:679px;width:35px;height:23px;border:1px solid #dddddd;background:#eeeeee;overflow:hidden"></div>
<div class="t" style="left:528px;top:680.00px;width:30px;overflow:hidden;font-size:13px;line-height:20px;color:#555">0.020</div>
<svg class="s" style="left:272px;top:734px;" width="18" height="18" viewBox="0 0 18 18"><rect x="0" y="0" width="18" height="18" rx="2.5" fill="#337ab7"/><path d="M3.6,9.3 L7.2,12.8 L14.4,5.4" stroke="#fff" stroke-width="2.2" fill="none"/></svg>
<div class="t" style="left:309.03984375px;top:733.00px;font-size:13px;line-height:20px;color:#666;font-weight:normal;letter-spacing:0px;">Clip model</div>
<svg class="s" style="left:272px;top:758px;" width="18" height="18" viewBox="0 0 18 18"><rect x="0.75" y="0.75" width="16.5" height="16.5" rx="2" fill="#fff" stroke="#c6c6c6" stroke-width="1.5"/></svg>
<div class="t" style="left:308.63359375px;top:757.00px;font-size:13px;line-height:20px;color:#666;font-weight:normal;letter-spacing:0px;">Project vectors onto plane</div>
<svg class="s" style="left:272px;top:782px;" width="18" height="18" viewBox="0 0 18 18"><rect x="1" y="1" width="16" height="16" rx="2" fill="#fff" stroke="#222" stroke-width="2"/></svg>
<div class="t" style="left:309.10966796875px;top:781.00px;font-size:13px;line-height:20px;color:#666;font-weight:normal;letter-spacing:0px;">Show element mesh</div>
<div class="r" style="left:569px;top:57px;width:1285px;height:852px;background:#ffffff;"></div>
<div class="r" style="left:569px;top:56px;width:1285px;height:1px;background:#dde3ea;"></div>
<svg class="s" style="left:569px;top:57px;overflow:hidden" width="1285" height="852" viewBox="569 57 1285 852">
<defs>
<linearGradient id="pipeg" gradientUnits="userSpaceOnUse" x1="1688" y1="57" x2="1880" y2="586">
<stop offset="0" stop-color="#449aac"/>
<stop offset="0.19" stop-color="#42889a"/>
<stop offset="0.5" stop-color="#4394a7"/>
<stop offset="0.68" stop-color="#428b9c"/>
<stop offset="0.83" stop-color="#417f8d"/>
<stop offset="1" stop-color="#449aac"/>
</linearGradient>
<radialGradient id="ringg" cx="0.5" cy="0.5" r="0.5">
<stop offset="0" stop-color="#0000d8"/>
<stop offset="0.785" stop-color="#0000d8"/>
<stop offset="0.8" stop-color="#0050d8"/>
<stop offset="0.812" stop-color="#00a8d8"/>
<stop offset="0.822" stop-color="#00d8d8"/>
<stop offset="0.848" stop-color="#00d8d8"/>
<stop offset="0.862" stop-color="#00e060"/>
<stop offset="0.878" stop-color="#10e000"/>
<stop offset="0.893" stop-color="#60dc00"/>
<stop offset="0.902" stop-color="#d0d800"/>
<stop offset="0.929" stop-color="#d8d800"/>
<stop offset="0.943" stop-color="#e0a000"/>
<stop offset="0.955" stop-color="#e05000"/>
<stop offset="0.965" stop-color="#d80000"/>
<stop offset="0.983" stop-color="#d80000"/>
<stop offset="0.988" stop-color="#f0d800"/>
<stop offset="0.995" stop-color="#f8e820"/>
<stop offset="1" stop-color="#f8f0a0"/>
</radialGradient>
</defs>
<polygon points="1100,268.9 1688,57 1854,57 1854,600.6 1283,805.2 1189,537" fill="url(#pipeg)"/>
<ellipse cx="1188.75" cy="537.9" rx="281.7" ry="284.2" fill="url(#ringg)"/>
</svg>
<div class="t" style="left:577.970703125px;top:66.00px;font-size:12px;line-height:20px;color:#111;font-weight:normal;letter-spacing:0px;">yPlus [node] (-)</div>
<svg class="s" style="left:577.5px;top:109.7px;" width="32" height="312" viewBox="0 0 32 312"><rect x="0" y="0" width="26" height="31" fill="#ff0000"/><rect x="0" y="31" width="26" height="31" fill="#ff7700"/><rect x="0" y="62" width="26" height="31" fill="#ffc800"/><rect x="0" y="93" width="26" height="31" fill="#ffff00"/><rect x="0" y="124" width="26" height="31" fill="#00ee00"/><rect x="0" y="155" width="26" height="31" fill="#00ffff"/><rect x="0" y="186" width="26" height="31" fill="#00d4ff"/><rect x="0" y="217" width="26" height="31" fill="#00a0ff"/><rect x="0" y="248" width="26" height="31" fill="#0060ff"/><rect x="0" y="279" width="26" height="31" fill="#0000ff"/><path d="M0,0 H30.5" stroke="#000" stroke-width="1.5"/><path d="M0,31 H30.5" stroke="#000" stroke-width="1.5"/><path d="M0,62 H30.5" stroke="#000" stroke-width="1.5"/><path d="M0,93 H30.5" stroke="#000" stroke-width="1.5"/><path d="M0,124 H30.5" stroke="#000" stroke-width="1.5"/><path d="M0,155 H30.5" stroke="#000" stroke-width="1.5"/><path d="M0,186 H30.5" stroke="#000" stroke-width="1.5"/><path d="M0,217 H30.5" stroke="#000" stroke-width="1.5"/><path d="M0,248 H30.5" stroke="#000" stroke-width="1.5"/><path d="M0,279 H30.5" stroke="#000" stroke-width="1.5"/><path d="M0,310 H30.5" stroke="#000" stroke-width="1.5"/><path d="M0.75,0 V310 M25.25,0 V310" stroke="#000" stroke-width="1.5"/></svg>
<div class="t" style="left:612.51953125px;top:97.00px;font-size:12px;line-height:20px;color:#111;font-weight:normal;letter-spacing:0px;">50</div>
<div class="t" style="left:612.724609375px;top:128.00px;font-size:12px;line-height:20px;color:#111;font-weight:normal;letter-spacing:0px;">45</div>
<div class="t" style="left:612.724609375px;top:159.00px;font-size:12px;line-height:20px;color:#111;font-weight:normal;letter-spacing:0px;">40</div>
<div class="t" style="left:612.54296875px;top:190.00px;font-size:12px;line-height:20px;color:#111;font-weight:normal;letter-spacing:0px;">35</div>
<div class="t" style="left:612.54296875px;top:221.00px;font-size:12px;line-height:20px;color:#111;font-weight:normal;letter-spacing:0px;">30</div>
<div class="t" style="left:612.396484375px;top:252.00px;font-size:12px;line-height:20px;color:#111;font-weight:normal;letter-spacing:0px;">25</div>
<div class="t" style="left:612.396484375px;top:283.00px;font-size:12px;line-height:20px;color:#111;font-weight:normal;letter-spacing:0px;">20</div>
<div class="t" style="left:612.0859375px;top:314.00px;font-size:12px;line-height:20px;color:#111;font-weight:normal;letter-spacing:0px;">15</div>
<div class="t" style="left:612.0859375px;top:345.00px;font-size:12px;line-height:20px;color:#111;font-weight:normal;letter-spacing:0px;">10</div>
<div class="t" style="left:612.51953125px;top:376.00px;font-size:12px;line-height:20px;color:#111;font-weight:normal;letter-spacing:0px;">5</div>
<div class="t" style="left:612.53125px;top:407.00px;font-size:12px;line-height:20px;color:#111;font-weight:normal;letter-spacing:0px;">0</div>
<div class="t" style="left:577.490234375px;top:428.00px;font-size:12px;line-height:20px;color:#111;font-weight:normal;letter-spacing:0px;">epsilon (m&#178;/s&#179;)</div>
<svg class="s" style="left:577.5px;top:472.7px;" width="32" height="312" viewBox="0 0 32 312"><rect x="0" y="0" width="26" height="310" fill="#7a7a7a"/><path d="M0,0.00 H30.5" stroke="#000" stroke-width="1.5"/><path d="M0,10.33 H26" stroke="#000" stroke-width="1.5"/><path d="M0,20.67 H26" stroke="#000" stroke-width="1.5"/><path d="M0,31.00 H30.5" stroke="#000" stroke-width="1.5"/><path d="M0,41.33 H26" stroke="#000" stroke-width="1.5"/><path d="M0,51.67 H26" stroke="#000" stroke-width="1.5"/><path d="M0,62.00 H30.5" stroke="#000" stroke-width="1.5"/><path d="M0,72.33 H26" stroke="#000" stroke-width="1.5"/><path d="M0,82.67 H26" stroke="#000" stroke-width="1.5"/><path d="M0,93.00 H30.5" stroke="#000" stroke-width="1.5"/><path d="M0,103.33 H26" stroke="#000" stroke-width="1.5"/><path d="M0,113.67 H26" stroke="#000" stroke-width="1.5"/><path d="M0,124.00 H30.5" stroke="#000" stroke-width="1.5"/><path d="M0,134.33 H26" stroke="#000" stroke-width="1.5"/><path d="M0,144.67 H26" stroke="#000" stroke-width="1.5"/><path d="M0,155.00 H30.5" stroke="#000" stroke-width="1.5"/><path d="M0,165.33 H26" stroke="#000" stroke-width="1.5"/><path d="M0,175.67 H26" stroke="#000" stroke-width="1.5"/><path d="M0,186.00 H30.5" stroke="#000" stroke-width="1.5"/><path d="M0,196.33 H26" stroke="#000" stroke-width="1.5"/><path d="M0,206.67 H26" stroke="#000" stroke-width="1.5"/><path d="M0,217.00 H30.5" stroke="#000" stroke-width="1.5"/><path d="M0,227.33 H26" stroke="#000" stroke-width="1.5"/><path d="M0,237.67 H26" stroke="#000" stroke-width="1.5"/><path d="M0,248.00 H30.5" stroke="#000" stroke-width="1.5"/><path d="M0,258.33 H26" stroke="#000" stroke-width="1.5"/><path d="M0,268.67 H26" stroke="#000" stroke-width="1.5"/><path d="M0,279.00 H30.5" stroke="#000" stroke-width="1.5"/><path d="M0,289.33 H26" stroke="#000" stroke-width="1.5"/><path d="M0,299.67 H26" stroke="#000" stroke-width="1.5"/><path d="M0,310.00 H30.5" stroke="#000" stroke-width="1.5"/><path d="M0.75,0 V310 M25.25,0 V310" stroke="#000" stroke-width="1.5"/></svg>
<div class="t" style="left:612.93125px;top:459.00px;font-size:12px;line-height:20px;color:#111;font-weight:normal;letter-spacing:-0.1px;">0.0305944</div>
<div class="t" style="left:612.93125px;top:490.00px;font-size:12px;line-height:20px;color:#111;font-weight:normal;letter-spacing:-0.1px;">0.0305944</div>
<div class="t" style="left:612.93125px;top:521.00px;font-size:12px;line-height:20px;color:#111;font-weight:normal;letter-spacing:-0.1px;">0.0305944</div>
<div class="t" style="left:612.93125px;top:552.00px;font-size:12px;line-height:20px;color:#111;font-weight:normal;letter-spacing:-0.1px;">0.0305944</div>
<div class="t" style="left:612.93125px;top:583.00px;font-size:12px;line-height:20px;color:#111;font-weight:normal;letter-spacing:-0.1px;">0.0305944</div>
<div class="t" style="left:612.93125px;top:614.00px;font-size:12px;line-height:20px;color:#111;font-weight:normal;letter-spacing:-0.1px;">0.0305944</div>
<div class="t" style="left:612.93125px;top:645.00px;font-size:12px;line-height:20px;color:#111;font-weight:normal;letter-spacing:-0.1px;">0.0305944</div>
<div class="t" style="left:612.93125px;top:676.00px;font-size:12px;line-height:20px;color:#111;font-weight:normal;letter-spacing:-0.1px;">0.0305944</div>
<div class="t" style="left:612.93125px;top:707.00px;font-size:12px;line-height:20px;color:#111;font-weight:normal;letter-spacing:-0.1px;">0.0305944</div>
<div class="t" style="left:612.93125px;top:738.00px;font-size:12px;line-height:20px;color:#111;font-weight:normal;letter-spacing:-0.1px;">0.0305944</div>
<div class="t" style="left:612.93125px;top:769.00px;font-size:12px;line-height:20px;color:#111;font-weight:normal;letter-spacing:-0.1px;">0.0305944</div>
<svg class="s" style="left:580px;top:802px;" width="20" height="18" viewBox="0 0 20 18"><path d="M1,9.5 L9.5,1.5 L18,9.5 L14,9.5 L14,16.5 L5,16.5 L5,9.5Z" fill="#000"/><path d="M14.5,1.5 V7.5" stroke="#000" stroke-width="1.4"/></svg>
<div class="t" style="left:588.033935546875px;top:813.00px;font-size:11.5px;line-height:20px;color:#000;font-weight:normal;letter-spacing:0px;">z</div>
<svg class="s" style="left:585px;top:820px;" width="110" height="90" viewBox="0 0 110 90"><defs><linearGradient id="cubeg" x1="0" y1="0" x2="1" y2="1"><stop offset="0" stop-color="#f0f0f0"/><stop offset="1" stop-color="#d2d2d2"/></linearGradient></defs>
<path d="M15.4,25.7 L68.5,7.3 L86.8,63.6 L30.5,82.6Z" fill="url(#cubeg)"/>
<path d="M68.5,7.3 L86.8,63.6" stroke="#333" stroke-width="0.8"/><path d="M30.5,82.6 L11.32,22.13" stroke="#0000e6" stroke-width="2.8"/><path d="M8.9,14.5 L15.43,21.87 L7.81,24.29Z" fill="#0000b0"/><path d="M30.5,82.6 L92.92,64.53" stroke="#e00000" stroke-width="2.8"/><path d="M100.6,62.3 L93.07,68.65 L90.84,60.96Z" fill="#b00000"/></svg>
<div class="t" style="left:612px;top:852px;font-size:15px;line-height:20px;font-weight:bold;color:#333;transform:rotate(-20deg);transform-origin:23px 10px">Neg Y</div>
<div class="t" style="left:690.859619140625px;top:865.00px;font-size:12.5px;line-height:20px;color:#000;font-weight:normal;letter-spacing:0px;">x</div>
<div class="r" style="left:709px;top:57px;width:699px;height:30px;box-shadow:2px 3px 4px rgba(0,0,0,0.28)"></div>
<div class="r" style="left:709px;top:57px;width:282px;height:30px;background:#e8e8e8;"></div>
<div class="r" style="left:709px;top:57px;width:12px;height:30px;background:#c4c4c4;"></div>
<div class="r" style="left:991px;top:57px;width:283px;height:30px;background:#e8e8e8;"></div>
<div class="r" style="left:991px;top:57px;width:13px;height:30px;background:#c4c4c4;"></div>
<div class="r" style="left:1276.5px;top:57px;width:131.5px;height:30px;background:#e8e8e8;"></div>
<div class="r" style="left:1276.5px;top:57px;width:11.5px;height:30px;background:#c4c4c4;"></div>
<div class="r" style="left:1378px;top:57px;width:30px;height:30px;background:#d4d4d4;"></div>
<div class="r" style="left:1274px;top:57px;width:2.5px;height:30px;background:#f8f8f8;"></div>
<svg class="s" style="left:723px;top:62px;" width="28" height="20" viewBox="0 0 28 20"><rect x="1" y="1.2" width="1.6" height="17.6" fill="#999"/><path d="M2.5,10 L13,1.2 V18.8Z M13,10 L24.5,1.2 V18.8Z" fill="#999"/></svg>
<svg class="s" style="left:757px;top:62px;" width="18" height="20" viewBox="0 0 18 20"><rect x="1.7" y="1.2" width="1.6" height="17.6" fill="#999"/><path d="M3,10 L15.8,1.2 V18.8Z" fill="#999"/></svg>
<svg class="s" style="left:787px;top:62px;" width="20" height="20" viewBox="0 0 20 20"><path d="M1,1.3 L18,10 L1,18.8Z" fill="#000"/></svg>
<svg class="s" style="left:817px;top:62px;" width="18" height="20" viewBox="0 0 18 20"><path d="M1,1.2 L14.5,10 L1,18.8Z" fill="#000"/><rect x="13.8" y="1.2" width="1.8" height="17.6" fill="#000"/></svg>
<svg class="s" style="left:843px;top:62px;" width="28" height="20" viewBox="0 0 28 20"><path d="M1,1.2 L10.5,10 L1,18.8Z M10.3,1.2 L23.5,10 L10.3,18.8Z" fill="#000"/><rect x="23" y="1.2" width="1.8" height="17.6" fill="#000"/></svg>
<svg class="s" style="left:880px;top:62px;" width="12" height="20" viewBox="0 0 12 20"><g fill="#000"><circle cx="6" cy="2.8" r="2.1"/><circle cx="6" cy="10" r="2.1"/><circle cx="6" cy="17" r="2.1"/></g></svg>
<svg class="s" style="left:903px;top:64px;" width="26" height="16" viewBox="0 0 26 16"><path d="M7.5,2.5 L2.5,8 L7.5,13.5 M18.5,2.5 L23.5,8 L18.5,13.5" stroke="#000" stroke-width="1.9" fill="none"/><g fill="#000"><circle cx="10" cy="8" r="1.1"/><circle cx="13" cy="8" r="1.1"/><circle cx="16" cy="8" r="1.1"/></g></svg>
<svg class="s" style="left:937px;top:60px;" width="18" height="26" viewBox="0 0 18 26"><g fill="#9a9a9a"><circle cx="8" cy="3.2" r="2"/><path d="M6,6 L9.5,6 L10.5,12.5 L12.5,16 L11,16 L9,13.5 L10,24 L8.5,24 L6.8,16 L3.5,24 L2,23.5 L5.8,14.5 Z"/>
<rect x="2" y="6.5" width="3" height="6" rx="0.8"/></g><path d="M14,11 V25.5" stroke="#9a9a9a" stroke-width="1.1"/><path d="M10.5,11.5 L14.5,11.5" stroke="#9a9a9a" stroke-width="1"/></svg>
<svg class="s" style="left:963px;top:62px;" width="26" height="20" viewBox="0 0 26 20"><g fill="#9a9a9a"><circle cx="20" cy="4.5" r="2"/><path d="M8.5,4 L14,3 L18.5,7 L19,11.5 L23,11.5 L23,12.8 L17.8,12.8 L16.5,10 L13.5,14 L17,17.5 L16,18.5 L11.5,15 L5,19 L4.5,17.8 L9.5,13.5 L13.5,6 L10,6.5Z"/></g>
<path d="M2,12 L8,9.5 M1,14.5 L7,12 M3,9 L9,6.8" stroke="#bdbdbd" stroke-width="0.6"/></svg>
<svg class="s" style="left:1008px;top:61.5px;" width="22" height="22" viewBox="0 0 22 22"><defs><linearGradient id="cf1008" x1="0" y1="0" x2="1" y2="1"><stop offset="0" stop-color="#9fdcff"/><stop offset="1" stop-color="#0a9ce8"/></linearGradient>
<linearGradient id="ct1008" x1="0" y1="0" x2="1" y2="1"><stop offset="0" stop-color="#3a8fc0"/><stop offset="1" stop-color="#1570a8"/></linearGradient></defs>
<path d="M1,6.2 L6.8,0.6 L20.3,0.6 L14.5,6.2Z" fill="url(#ct1008)"/>
<path d="M14.5,6.2 L20.3,0.6 L20.3,14.8 L14.5,20.5Z" fill="#0a5f94"/>
<path d="M1,6.2 H14.5 V20.5 H1Z" fill="url(#cf1008)"/></svg>
<svg class="s" style="left:1038px;top:61.5px;" width="22" height="22" viewBox="0 0 22 22"><defs><linearGradient id="cf1038" x1="0" y1="0" x2="1" y2="1"><stop offset="0" stop-color="#ffffff"/><stop offset="1" stop-color="#0a9ce8"/></linearGradient>
<linearGradient id="ct1038" x1="0" y1="0" x2="1" y2="1"><stop offset="0" stop-color="#c8ecff"/><stop offset="1" stop-color="#0aa0f0"/></linearGradient></defs>
<path d="M1,6.2 L6.8,0.6 L20.3,0.6 L14.5,6.2Z" fill="url(#ct1038)"/>
<path d="M14.5,6.2 L20.3,0.6 L20.3,14.8 L14.5,20.5Z" fill="#0a8ad8"/>
<path d="M1,6.2 H14.5 V20.5 H1Z" fill="url(#cf1038)"/></svg>
<svg class="s" style="left:1068px;top:61.5px;" width="22" height="22" viewBox="0 0 22 22"><defs><linearGradient id="cf1068" x1="0" y1="0" x2="1" y2="1"><stop offset="0" stop-color="#ffffff"/><stop offset="1" stop-color="#2aa8f0"/></linearGradient>
<linearGradient id="ct1068" x1="0" y1="0" x2="1" y2="1"><stop offset="0" stop-color="#bfe6ff"/><stop offset="1" stop-color="#2aa8f0"/></linearGradient></defs>
<path d="M1,6.2 L6.8,0.6 L20.3,0.6 L14.5,6.2Z" fill="url(#ct1068)" stroke="#000" stroke-width="1.6" stroke-linejoin="round"/>
<path d="M14.5,6.2 L20.3,0.6 L20.3,14.8 L14.5,20.5Z" fill="#1a8ed8" stroke="#000" stroke-width="1.6" stroke-linejoin="round"/>
<path d="M1,6.2 H14.5 V20.5 H1Z" fill="url(#cf1068)" stroke="#000" stroke-width="1.6" stroke-linejoin="round"/></svg>
<svg class="s" style="left:1098px;top:61.5px;" width="22" height="22" viewBox="0 0 22 22"><defs><linearGradient id="cf1098" x1="0" y1="0" x2="1" y2="1"><stop offset="0" stop-color="#6cc8f8"/><stop offset="1" stop-color="#2aa8f0"/></linearGradient>
<linearGradient id="ct1098" x1="0" y1="0" x2="1" y2="1"><stop offset="0" stop-color="#5ab8ec"/><stop offset="1" stop-color="#2a98d8"/></linearGradient></defs>
<path d="M1,6.2 L6.8,0.6 L20.3,0.6 L14.5,6.2Z" fill="url(#ct1098)" stroke="#000" stroke-width="1.6" stroke-linejoin="round"/>
<path d="M14.5,6.2 L20.3,0.6 L20.3,14.8 L14.5,20.5Z" fill="#1a7ab8" stroke="#000" stroke-width="1.6" stroke-linejoin="round"/>
<path d="M1,6.2 H14.5 V20.5 H1Z" fill="url(#cf1098)" stroke="#000" stroke-width="1.6" stroke-linejoin="round"/><path d="M7.75,6.2 V20.5 M1,13.3 H14.5 M4,3.4 H17.5 M17.4,3.4 V17.6 M14.5,13.3 L20.3,7.6 M10.6,0.6 L7.75,6.2" stroke="#000" stroke-width="1.2" fill="none"/></svg>
<svg class="s" style="left:1128px;top:61.5px;" width="22" height="22" viewBox="0 0 22 22"><defs><linearGradient id="cf1128" x1="0" y1="0" x2="1" y2="1"><stop offset="0" stop-color="#9fdcff"/><stop offset="1" stop-color="#25a5ec"/></linearGradient>
<linearGradient id="ct1128" x1="0" y1="0" x2="1" y2="1"><stop offset="0" stop-color="#3a9ad0"/><stop offset="1" stop-color="#1d78b0"/></linearGradient></defs>
<path d="M1,6.2 L6.8,0.6 L20.3,0.6 L14.5,6.2Z" fill="url(#ct1128)" stroke="#000" stroke-width="1.6" stroke-linejoin="round"/>
<path d="M14.5,6.2 L20.3,0.6 L20.3,14.8 L14.5,20.5Z" fill="#0f5f90" stroke="#000" stroke-width="1.6" stroke-linejoin="round"/>
<path d="M1,6.2 H14.5 V20.5 H1Z" fill="url(#cf1128)" stroke="#000" stroke-width="1.6" stroke-linejoin="round"/></svg>
<svg class="s" style="left:1158px;top:61.5px;" width="22" height="22" viewBox="0 0 22 22"><path d="M1,6.2 L6.8,0.6 L20.3,0.6 L14.5,6.2Z M14.5,6.2 L20.3,0.6 L20.3,14.8 L14.5,20.5Z M1,6.2 H14.5 V20.5 H1Z" fill="none" stroke="#000" stroke-width="1.5" stroke-linejoin="round"/><path d="M7.75,6.2 V20.5 M1,13.3 H14.5 M4,3.4 H17.5 M17.4,3.4 V17.6 M14.5,13.3 L20.3,7.6 M10.6,0.6 L7.75,6.2 M3,9 L6,12 M9,16 L13,19 M10,9 L13,10" stroke="#000" stroke-width="1" fill="none"/></svg>
<svg class="s" style="left:1188px;top:61.5px;" width="22" height="22" viewBox="0 0 22 22"><path d="M1,6.2 L6.8,0.6 L20.3,0.6 L14.5,6.2Z M14.5,6.2 L20.3,0.6 L20.3,14.8 L14.5,20.5Z M1,6.2 H14.5 V20.5 H1Z" fill="none" stroke="#000" stroke-width="1.5" stroke-linejoin="round"/><path d="M6.8,0.6 V14.8 H20.3 M6.8,14.8 L1,20.5" stroke="#000" stroke-width="1.3" fill="none"/></svg>
<svg class="s" style="left:1218px;top:61.5px;" width="22" height="22" viewBox="0 0 22 22"><path d="M1,6.2 L6.8,0.6 L20.3,0.6 L14.5,6.2Z M14.5,6.2 L20.3,0.6 L20.3,14.8 L14.5,20.5Z M1,6.2 H14.5 V20.5 H1Z M7.8,6.2 V20.5 M1,13.3 H14.5" fill="none" stroke="#888" stroke-width="0.8"/><circle cx="1" cy="6.2" r="1.1" fill="#ee1111"/><circle cx="7.8" cy="6.2" r="1.1" fill="#ee1111"/><circle cx="14.5" cy="6.2" r="1.1" fill="#ee1111"/><circle cx="1" cy="13.3" r="1.1" fill="#ee1111"/><circle cx="14.5" cy="13.3" r="1.1" fill="#ee1111"/><circle cx="1" cy="20.5" r="1.1" fill="#ee1111"/><circle cx="7.8" cy="20.5" r="1.1" fill="#ee1111"/><circle cx="14.5" cy="20.5" r="1.1" fill="#ee1111"/><circle cx="7.5" cy="0.6" r="1.1" fill="#ee1111"/><circle cx="13.8" cy="0.6" r="1.1" fill="#ee1111"/><circle cx="20.3" cy="0.6" r="1.1" fill="#ee1111"/><circle cx="20.3" cy="7.6" r="1.1" fill="#ee1111"/><circle cx="20.3" cy="14.8" r="1.1" fill="#ee1111"/><circle cx="17.4" cy="3.4" r="1.1" fill="#ee1111"/><circle cx="17.4" cy="17.6" r="1.1" fill="#ee1111"/><circle cx="7.8" cy="13.3" r="1.1" fill="#ee1111"/></svg>
<svg class="s" style="left:1248px;top:61.5px;" width="22" height="22" viewBox="0 0 22 22"><path d="M1,6.2 L6.8,0.6 L20.3,0.6 L14.5,6.2Z M14.5,6.2 L20.3,0.6 L20.3,14.8 L14.5,20.5Z M1,6.2 H14.5 V20.5 H1Z" fill="#fff" stroke="#000" stroke-width="1.5" stroke-linejoin="round"/><path d="M7.75,6.2 V20.5 M1,13.3 H14.5 M10.6,0.6 L7.75,6.2 M4,3.4 H17.5 M17.4,3.4 V17.6 M14.5,13.3 L20.3,7.6" stroke="#000" stroke-width="1.2" fill="none"/></svg>
<svg class="s" style="left:1291px;top:60px;" width="26" height="25" viewBox="0 0 26 25"><path d="M12,1 V25 M1,12 H23" stroke="#111" stroke-width="1.8"/><text x="16" y="24" font-family="Liberation Sans" font-weight="bold" font-size="10" fill="#2222cc">P</text></svg>
<svg class="s" style="left:1321px;top:60px;" width="26" height="25" viewBox="0 0 26 25"><path d="M12,1 V25 M1,12 H23" stroke="#111" stroke-width="1.8"/><text x="16" y="24" font-family="Liberation Sans" font-weight="bold" font-size="10" fill="#2222cc">E</text></svg>
<svg class="s" style="left:1348px;top:58px;" width="30" height="28" viewBox="0 0 30 28"><path d="M8,6 C2,8 2,20 8,23.5 C11,25.5 15,25 17.5,22" stroke="#222" stroke-width="1.2" fill="none"/>
<path d="M22,5 C27,9 27,18 21,21.5 C17,24 12,25.5 6,25" stroke="#222" stroke-width="1.2" fill="none"/>
<path d="M4.5,11 L5,5 L10,6.5Z M25,3 L19.5,3.5 L22,7.5Z" fill="#222"/>
<path d="M14,4.5 V16.5 L7,22 M14,16.5 L25,16.5" stroke="#e02828" stroke-width="2.2" fill="none"/>
<g transform="translate(21.5,20.5)"><path d="M0,-5 L2.3,-2.5 L1,-2.5 L1,-1 L2.5,-1 L2.5,-2.3 L5,0 L2.5,2.3 L2.5,1 L1,1 L1,2.5 L2.3,2.5 L0,5 L-2.3,2.5 L-1,2.5 L-1,1 L-2.5,1 L-2.5,2.3 L-5,0 L-2.5,-2.3 L-2.5,-1 L-1,-1 L-1,-2.5 L-2.3,-2.5Z" fill="#1a2ad0"/></g></svg>
<svg class="s" style="left:1380px;top:60px;" width="24" height="26" viewBox="0 0 24 26"><circle cx="14" cy="11.5" r="4.8" fill="none" stroke="#222" stroke-width="1.5"/><path d="M14,3.5 V19.5 M6,11.5 H22" stroke="#222" stroke-width="1.5"/><path d="M2.5,23 C4,19 6,17.5 8.5,16.5 M3,17.5 C5,19 6,20.5 7,22" stroke="#e04040" stroke-width="1.2" fill="none"/></svg>
</body></html>
